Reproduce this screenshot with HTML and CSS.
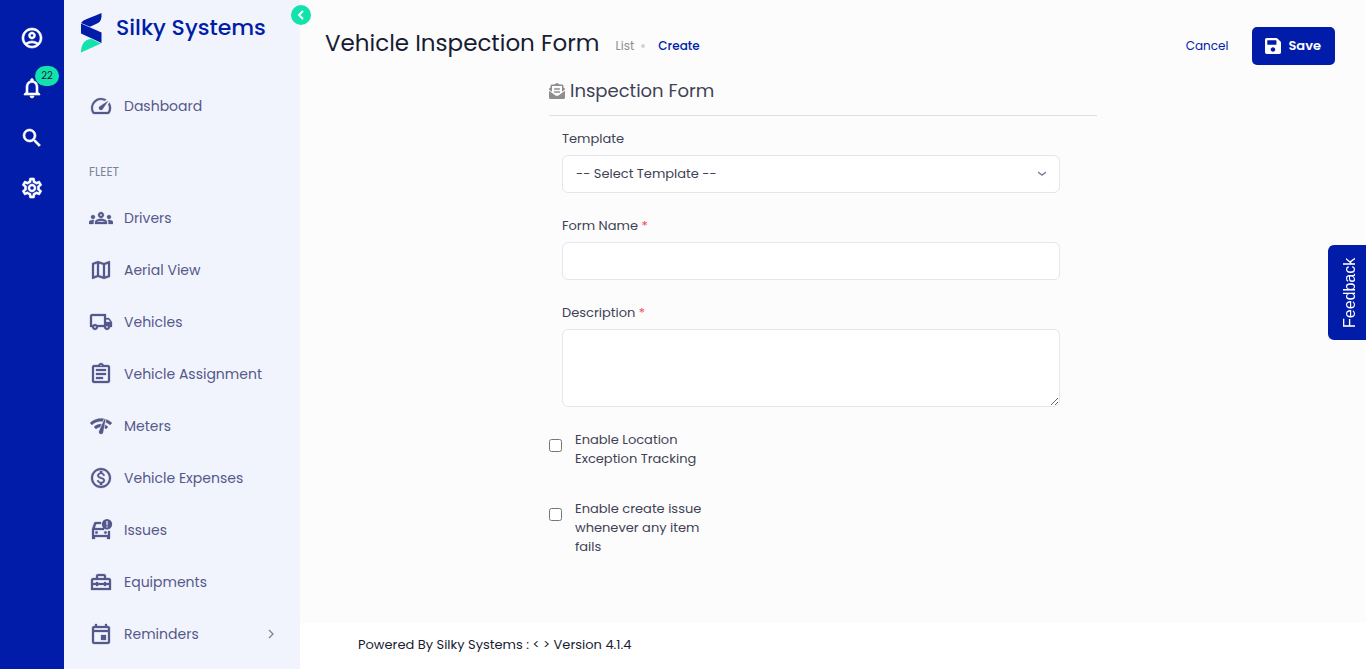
FILE: index.html
```html
<!DOCTYPE html>
<html lang="en">
<head>
    <meta charset="UTF-8">
    <meta name="viewport" content="width=device-width, initial-scale=1.0">
    <title>Vehicle Inspection Form | Silky Systems</title>
    <link rel="stylesheet" href="styles.css">
</head>
<body>
    <div class="page">
        <!-- Icon rail -->
        <nav class="rail">
            <a href="#" class="rail-link" aria-label="Account">
                <svg class="icon" viewBox="0 0 24 24"><path d="M12 2C6.48 2 2 6.48 2 12s4.48 10 10 10 10-4.48 10-10S17.52 2 12 2zM7.35 18.5C8.66 17.56 10.26 17 12 17s3.34.56 4.65 1.5C15.34 19.44 13.74 20 12 20s-3.34-.56-4.65-1.5zm10.79-1.38C16.45 15.8 14.32 15 12 15s-4.45.8-6.14 2.12C4.7 15.73 4 13.95 4 12c0-4.42 3.58-8 8-8s8 3.58 8 8c0 1.95-.7 3.73-1.86 5.12zM12 6c-1.93 0-3.5 1.57-3.5 3.5S10.07 13 12 13s3.5-1.57 3.5-3.5S13.93 6 12 6zm0 5c-.83 0-1.5-.67-1.5-1.5S11.17 8 12 8s1.5.67 1.5 1.5S12.83 11 12 11z"/></svg>
            </a>
            <a href="#" class="rail-link" aria-label="Notifications">
                <svg class="icon" viewBox="0 0 24 24"><path d="M12 22c1.1 0 2-.9 2-2h-4c0 1.1.89 2 2 2zm6-6v-5c0-3.07-1.63-5.64-4.5-6.32V4c0-.83-.67-1.5-1.5-1.5s-1.5.67-1.5 1.5v.68C7.64 5.36 6 7.92 6 11v5l-2 2v1h16v-1l-2-2zm-2 1H8v-6c0-2.48 1.51-4.5 4-4.5s4 2.02 4 4.5v6z"/></svg>
                <span class="badge">22</span>
            </a>
            <a href="#" class="rail-link" aria-label="Search">
                <svg class="icon" viewBox="0 0 24 24"><path d="M15.5 14h-.79l-.28-.27A6.471 6.471 0 0 0 16 9.5 6.5 6.5 0 1 0 9.5 16c1.61 0 3.09-.59 4.23-1.57l.27.28v.79l5 4.99L20.49 19l-4.99-5zm-6 0C7.01 14 5 11.99 5 9.5S7.01 5 9.5 5 14 7.01 14 9.5 11.99 14 9.5 14z"/></svg>
            </a>
            <a href="#" class="rail-link" aria-label="Settings">
                <svg class="icon" viewBox="0 0 24 24"><path d="M19.43 12.98c.04-.32.07-.64.07-.98 0-.34-.03-.66-.07-.98l2.11-1.65c.19-.15.24-.42.12-.64l-2-3.46a.5.5 0 0 0-.61-.22l-2.49 1c-.52-.4-1.08-.73-1.69-.98l-.38-2.65A.488.488 0 0 0 14 2h-4c-.25 0-.46.18-.49.42l-.38 2.65c-.61.25-1.17.59-1.69.98l-2.49-1a.566.566 0 0 0-.18-.03c-.17 0-.34.09-.43.25l-2 3.46c-.13.22-.07.49.12.64l2.11 1.65c-.04.32-.07.65-.07.98 0 .33.03.66.07.98l-2.11 1.65c-.19.15-.24.42-.12.64l2 3.46a.5.5 0 0 0 .61.22l2.49-1c.52.4 1.08.73 1.69.98l.38 2.65c.03.24.24.42.49.42h4c.25 0 .46-.18.49-.42l.38-2.65c.61-.25 1.17-.59 1.69-.98l2.49 1c.06.02.12.03.18.03.17 0 .34-.09.43-.25l2-3.46c.12-.22.07-.49-.12-.64l-2.11-1.65zm-1.98-1.71c.04.31.05.52.05.73 0 .21-.02.43-.05.73l-.14 1.13.89.7 1.08.84-.7 1.21-1.27-.51-1.04-.42-.9.68c-.43.32-.84.56-1.25.73l-1.06.43-.16 1.13-.2 1.35h-1.4l-.19-1.35-.16-1.13-1.06-.43c-.43-.18-.83-.41-1.23-.71l-.91-.7-1.06.43-1.27.51-.7-1.21 1.08-.84.89-.7-.14-1.13c-.03-.31-.05-.54-.05-.74s.02-.43.05-.73l.14-1.13-.89-.7-1.08-.84.7-1.21 1.27.51 1.04.42.9-.68c.43-.32.84-.56 1.25-.73l1.06-.43.16-1.13.2-1.35h1.39l.19 1.35.16 1.13 1.06.43c.43.18.83.41 1.23.71l.91.7 1.06-.43 1.27-.51.7 1.21-1.07.85-.89.7.14 1.13zM12 8c-2.21 0-4 1.79-4 4s1.79 4 4 4 4-1.79 4-4-1.79-4-4-4zm0 6c-1.1 0-2-.9-2-2s.9-2 2-2 2 .9 2 2-.9 2-2 2z"/></svg>
            </a>
        </nav>

        <!-- Sidebar -->
        <aside class="sidebar">
            <a href="#" class="brand">
                <svg class="brand-logo" viewBox="0 0 22 40">
                    <path fill="#001ca8" d="M21.500 0v4C21 8 19 10 16 11l-6 2.800L1 10C4 6 8 6 21.500 0z"/>
                    <path fill="#001ca8" d="M1 10.500l20.500 9V30L1 20.500z"/>
                    <path fill="#12e2ac" d="M1 39.500C1 31 5 26 11.500 26l9.500 4.500z"/>
                </svg>
                <span>Silky Systems</span>
            </a>
            <button type="button" class="collapse" aria-label="Collapse menu">
                <svg viewBox="0 0 20 20"><path d="M12 6l-4 4 4 4" fill="none" stroke="#fff" stroke-width="2"/></svg>
            </button>

            <nav class="menu">
                <a href="#" class="menu-link">
                    <svg class="icon" viewBox="0 0 24 24"><path d="m20.380 8.570-1.230 1.850a8 8 0 0 1-.22 7.580H5.070A8 8 0 0 1 15.580 6.850l1.850-1.230A10 10 0 0 0 3.350 19a2 2 0 0 0 1.720 1h13.850a2 2 0 0 0 1.740-1 10 10 0 0 0-.27-10.440zm-9.790 6.840a2 2 0 0 0 2.830 0l5.660-8.490-8.490 5.660a2 2 0 0 0 0 2.830z"/></svg>
                    <span>Dashboard</span>
                </a>
                <h2 class="menu-title">FLEET</h2>
                <a href="#" class="menu-link">
                    <svg class="icon" viewBox="0 0 24 24"><path d="M4 13c1.100 0 2-.9 2-2s-.9-2-2-2-2 .9-2 2 .9 2 2 2zm1.130 1.100C4.760 14.040 4.390 14 4 14c-.99 0-1.930.21-2.780.58A2.010 2.010 0 0 0 0 16.430V18h4.500v-1.610c0-.83.23-1.610.63-2.290zM20 13c1.100 0 2-.9 2-2s-.9-2-2-2-2 .9-2 2 .9 2 2 2zm4 3.430c0-.81-.48-1.530-1.220-1.850A6.950 6.950 0 0 0 20 14c-.39 0-.76.04-1.130.1.4.68.63 1.460.63 2.290V18H24v-1.570zm-7.760-2.780A10.100 10.100 0 0 0 12 12.750c-1.630 0-3.070.39-4.240.9A2.988 2.988 0 0 0 6 16.390V18h12v-1.610c0-1.180-.68-2.260-1.760-2.740zM8.070 16c.09-.23.13-.39.91-.69.97-.38 1.990-.56 3.020-.56s2.050.18 3.020.56c.77.3.81.46.91.69H8.070zM12 8c.55 0 1 .45 1 1s-.45 1-1 1-1-.45-1-1 .45-1 1-1m0-2c-1.660 0-3 1.340-3 3s1.340 3 3 3 3-1.340 3-3-1.340-3-3-3z"/></svg>
                    <span>Drivers</span>
                </a>
                <a href="#" class="menu-link">
                    <svg class="icon" viewBox="0 0 24 24"><path d="m20.500 3-.16.03L15 5.100 9 3 3.360 4.900c-.21.07-.36.25-.36.48V20.500c0 .28.22.5.5.5l.16-.03L9 18.900l6 2.100 5.640-1.900c.21-.07.36-.25.36-.48V3.500c0-.28-.22-.5-.5-.5zM10 5.470l4 1.400v11.660l-4-1.400V5.470zm-5 .99 3-1.010v11.700l-3 1.160V6.460zm14 11.080-3 1.010V6.860l3-1.160v11.840z"/></svg>
                    <span>Aerial View</span>
                </a>
                <a href="#" class="menu-link">
                    <svg class="icon" viewBox="0 0 24 24"><path d="M20 8h-3V4H3c-1.100 0-2 .9-2 2v11h2c0 1.660 1.340 3 3 3s3-1.340 3-3h6c0 1.660 1.340 3 3 3s3-1.340 3-3h2v-5l-3-4zm-.5 1.500 1.960 2.500H17V9.500h2.500zM6 18c-.55 0-1-.45-1-1s.45-1 1-1 1 .45 1 1-.45 1-1 1zm2.220-3c-.55-.61-1.330-1-2.220-1s-1.670.39-2.220 1H3V6h12v9H8.220zM18 18c-.55 0-1-.45-1-1s.45-1 1-1 1 .45 1 1-.45 1-1 1z"/></svg>
                    <span>Vehicles</span>
                </a>
                <a href="#" class="menu-link">
                    <svg class="icon" viewBox="0 0 24 24"><path d="M7 15h7v2H7zm0-4h10v2H7zm0-4h10v2H7zm12-4h-4.180C14.400 1.840 13.300 1 12 1c-1.300 0-2.400.84-2.820 2H5c-.14 0-.27.01-.4.04a2.008 2.008 0 0 0-1.440 1.190c-.1.23-.16.49-.16.77v14c0 .27.06.54.16.78s.25.45.43.64c.27.27.62.47 1.010.55.13.02.26.03.4.03h14c1.100 0 2-.9 2-2V5c0-1.100-.9-2-2-2zm-7-.25c.41 0 .75.34.75.75s-.34.75-.75.75-.75-.34-.75-.75.34-.75.75-.75zM19 19H5V5h14v14z"/></svg>
                    <span>Vehicle Assignment</span>
                </a>
                <a href="#" class="menu-link">
                    <svg class="icon" viewBox="0 0 24 24"><path d="M15.900 5c-.17 0-.32.09-.41.23l-.07.15-5.180 11.650c-.16.29-.26.61-.26.96 0 1.110.9 2.010 2.010 2.010.96 0 1.770-.68 1.960-1.590l.01-.03L16.400 5.500c0-.28-.22-.5-.5-.5zM1 9l2 2c2.880-2.880 6.790-4.080 10.530-3.620l1.190-2.680C9.890 3.840 4.740 5.270 1 9zm20 2 2-2a15.367 15.367 0 0 0-5.590-3.570l-.53 2.820c1.500.62 2.900 1.530 4.120 2.750zm-4 4 2-2c-.8-.8-1.700-1.420-2.660-1.890l-.55 2.920c.42.27.83.59 1.210.97zM5 13l2 2a7.100 7.100 0 0 1 4.030-2l1.280-2.880c-2.630-.08-5.300.87-7.310 2.880z"/></svg>
                    <span>Meters</span>
                </a>
                <a href="#" class="menu-link">
                    <svg class="icon" viewBox="0 0 24 24"><path d="M12 2C6.480 2 2 6.480 2 12s4.480 10 10 10 10-4.480 10-10S17.520 2 12 2zm0 18c-4.410 0-8-3.590-8-8s3.590-8 8-8 8 3.590 8 8-3.590 8-8 8zm.31-8.860c-1.770-.45-2.340-.94-2.340-1.670 0-.84.79-1.430 2.100-1.430 1.380 0 1.900.66 1.940 1.640h1.710c-.05-1.340-.87-2.570-2.490-2.970V5H10.900v1.690c-1.510.32-2.720 1.300-2.720 2.810 0 1.790 1.490 2.690 3.660 3.210 1.950.46 2.340 1.150 2.340 1.870 0 .53-.39 1.390-2.100 1.390-1.600 0-2.230-.72-2.320-1.640H8.040c.1 1.700 1.360 2.660 2.860 2.970V19h2.340v-1.670c1.520-.29 2.720-1.160 2.730-2.770-.01-2.200-1.900-2.960-3.660-3.420z"/></svg>
                    <span>Vehicle Expenses</span>
                </a>
                <a href="#" class="menu-link">
                    <svg class="icon" viewBox="0 0 24 24">
                        <path d="M12 4H6.500c-.7 0-1.200.4-1.400 1L3 11v10h3v-2h12v2h3v-8h-2v4H5v-5h10v-2H5.800l1.400-4H12z"/>
                        <circle cx="7.500" cy="14.500" r="1.300"/><circle cx="16.500" cy="14.500" r="1.300"/>
                        <path stroke="none" fill-rule="evenodd" d="M18 1a5.200 5.200 0 1 1 0 10.400A5.200 5.200 0 0 1 18 1zm-.6 2v4.200h1.200V3zm0 5.200v1.200h1.200V8.200z"/>
                    </svg>
                    <span>Issues</span>
                </a>
                <a href="#" class="menu-link">
                    <svg class="icon" viewBox="0 0 24 24"><path fill-rule="evenodd" d="M9 4h6c1.100 0 2 .9 2 2v2h3c1.100 0 2 .9 2 2v10H2V10c0-1.100.9-2 2-2h3V6c0-1.100.9-2 2-2zm0 2v2h6V6zM4 10v3h3v-1h2v1h6v-1h2v1h3v-3zm0 5v3h16v-3h-3v1h-2v-1H9v1H7v-1z"/></svg>
                    <span>Equipments</span>
                </a>
                <a href="#" class="menu-link">
                    <svg class="icon" viewBox="0 0 24 24"><path d="M19 4h-1V2h-2v2H8V2H6v2H5c-1.110 0-1.990.9-1.990 2L3 20a2 2 0 0 0 2 2h14c1.100 0 2-.9 2-2V6c0-1.100-.9-2-2-2zm0 16H5V10h14v10zm0-12H5V6h14v2zm-7 5h5v5h-5z"/></svg>
                    <span>Reminders</span>
                    <svg class="arrow" viewBox="0 0 10 10"><path d="M3 1l4 4-4 4" fill="none" stroke="#7e8299" stroke-width="1.300"/></svg>
                </a>
            </nav>
        </aside>

        <!-- Content -->
        <div class="content">
            <header class="header">
                <h1>Vehicle Inspection Form</h1>
                <nav class="breadcrumb">
                    <a href="#" class="crumb">List</a>
                    <span class="dot"></span>
                    <a href="#" class="crumb-active">Create</a>
                </nav>
                <a href="#" class="cancel">Cancel</a>
                <button type="submit" form="inspection-form" class="save">
                    <svg viewBox="0 32 448 448"><path d="M433.941 129.941l-83.882-83.882A48 48 0 0 0 316.118 32H48C21.490 32 0 53.490 0 80v352c0 26.510 21.490 48 48 48h352c26.510 0 48-21.490 48-48V163.882a48 48 0 0 0-14.059-33.941zM224 416c-35.346 0-64-28.654-64-64 0-35.346 28.654-64 64-64s64 28.654 64 64c0 35.346-28.654 64-64 64zm96-304.520V212c0 6.627-5.373 12-12 12H76c-6.627 0-12-5.373-12-12V108c0-6.627 5.373-12 12-12h228.520c3.183 0 6.235 1.264 8.485 3.515l3.480 3.480A11.996 11.996 0 0 1 320 111.480z"/></svg>
                    <span>Save</span>
                </button>
            </header>

            <main class="main">
                <form class="form" id="inspection-form">
                    <h2 class="form-title">
                        <svg viewBox="0 0 512 512"><path d="M176 216h160c8.840 0 16-7.160 16-16v-16c0-8.840-7.160-16-16-16H176c-8.840 0-16 7.160-16 16v16c0 8.840 7.160 16 16 16zm-16 80c0 8.840 7.160 16 16 16h160c8.840 0 16-7.160 16-16v-16c0-8.840-7.160-16-16-16H176c-8.840 0-16 7.160-16 16v16zm96 121.130c-16.420 0-32.840-5.060-46.860-15.190L0 250.860V464c0 26.510 21.490 48 48 48h416c26.510 0 48-21.490 48-48V250.860L302.860 401.940c-14.020 10.120-30.440 15.190-46.860 15.190zm237.610-254.180c-8.850-6.940-17.240-13.470-29.610-22.810V96c0-26.510-21.490-48-48-48h-77.550c-3.040-2.200-5.870-4.260-9.040-6.560C312.600 29.170 279.200-.35 256 0c-23.200-.35-56.590 29.170-73.410 41.440-3.170 2.300-6 4.360-9.040 6.560H96c-26.510 0-48 21.490-48 48v44.140c-12.370 9.330-20.760 15.870-29.610 22.810A47.995 47.995 0 0 0 0 200.720v10.650l96 69.350V96h320v184.720l96-69.350v-10.650c0-14.740-6.780-28.670-18.390-37.770z"/></svg>
                        <span>Inspection Form</span>
                    </h2>
                    <div class="field">
                        <label for="template">Template</label>
                        <select id="template" class="control">
                            <option>-- Select Template --</option>
                        </select>
                    </div>
                    <div class="field">
                        <label for="form-name">Form Name <span class="required">*</span></label>
                        <input type="text" id="form-name" class="control">
                    </div>
                    <div class="field">
                        <label for="description">Description <span class="required">*</span></label>
                        <textarea id="description" class="control"></textarea>
                    </div>
                    <div class="check">
                        <input type="checkbox" id="location">
                        <label for="location">Enable Location Exception Tracking</label>
                    </div>
                    <div class="check">
                        <input type="checkbox" id="issue">
                        <label for="issue">Enable create issue whenever any item fails</label>
                    </div>
                </form>
            </main>

            <footer class="footer">Powered By Silky Systems : &lt; &gt; Version 4.1.4</footer>
        </div>
    </div>

    <button type="button" class="feedback">Feedback</button>
</body>
</html>
```
FILE: styles.css
```css
/* General Styles */
* {
    box-sizing: border-box;
}

body {
    margin: 0;
    font-family: 'Poppins', 'Inter', sans-serif;
    font-size: 13px;
    line-height: 20px;
    color: #3f4254;
    background-color: #fcfcfc;
}

a {
    text-decoration: none;
}

h1, h2 {
    margin: 0;
    font-weight: 400;
}

button, input, select, textarea {
    font: inherit;
    color: inherit;
}

.page {
    display: flex;
    height: 100vh;
    overflow: hidden;
}

.icon {
    width: 24px;
    height: 24px;
    flex: none;
    fill: currentColor;
    stroke: currentColor;
    stroke-width: 0.3;
}

/* Icon Rail */
.rail {
    flex: none;
    width: 64px;
    padding-top: 26px;
    display: flex;
    flex-direction: column;
    align-items: center;
    gap: 26px;
    background-color: #001ca8;
}

.rail-link {
    position: relative;
    height: 24px;
    color: #fff;
}

.rail .icon {
    stroke-width: 0.6;
}

.badge {
    position: absolute;
    top: -10px;
    left: 15px;
    width: 24px;
    border-radius: 10px;
    font-size: 10px;
    text-align: center;
    color: #181c32;
    background-color: #12e2ac;
}

/* Sidebar */
.sidebar {
    position: relative;
    flex: none;
    width: 236px;
    background-color: #f1f4fc;
}

.brand {
    display: flex;
    gap: 14px;
    padding: 13px 0 0 16px;
    font-size: 22px;
    font-weight: 500;
    line-height: 30px;
    color: #001ca8;
}

.brand-logo {
    width: 22px;
    height: 40px;
}

.collapse {
    position: absolute;
    top: 5px;
    right: -11px;
    width: 20px;
    height: 20px;
    padding: 0;
    border: none;
    border-radius: 50%;
    background-color: #12e2ac;
}

.collapse svg {
    display: block;
}

.menu {
    padding: 27px 24px 0 25px;
}

.menu-link {
    display: flex;
    align-items: center;
    gap: 11px;
    height: 52px;
    font-size: 14px;
    color: #55588b;
}

.menu-title {
    padding: 30px 0 10px;
    font-size: 12px;
    color: #7e8299;
}

.arrow {
    width: 10px;
    height: 10px;
    margin-left: auto;
}

/* Content */
.content {
    flex: 1;
    min-width: 0;
    display: flex;
    flex-direction: column;
}

.header {
    display: flex;
    align-items: center;
    padding: 27px 31px 0 25px;
}

.header h1 {
    padding-bottom: 6px;
    font-size: 23px;
    line-height: 30px;
    color: #181c32;
}

.breadcrumb {
    display: flex;
    align-items: center;
    margin: 0 auto 0 16px;
    font-size: 12px;
}

.crumb {
    color: #8e8e96;
}

.dot {
    width: 4px;
    height: 4px;
    margin: 0 13px 0 7px;
    border-radius: 50%;
    background-color: #d1d3e0;
}

.crumb-active {
    font-weight: 500;
    color: #001ca8;
}

.cancel {
    margin-right: 24px;
    font-size: 12px;
    color: #001ca8;
}

.save {
    display: flex;
    align-items: center;
    gap: 7px;
    height: 38px;
    padding: 0 14px 0 13px;
    border: none;
    border-radius: 5px;
    font-weight: 600;
    color: #fff;
    background-color: #001ca8;
}

.save svg {
    width: 16px;
    height: 16px;
    fill: #fff;
}

/* Form */
.main {
    flex: 1;
    padding: 16px 20px 0 0;
}

.form {
    max-width: 548px;
    margin: 0 auto;
}

.form-title {
    display: flex;
    align-items: center;
    gap: 5px;
    margin-bottom: 13px;
    padding-bottom: 14px;
    border-bottom: 1px solid #dedee4;
    font-size: 18px;
}

.form-title svg {
    width: 16px;
    height: 16px;
    fill: #8e8e8e;
}

.field {
    display: flex;
    flex-direction: column;
    gap: 6px;
    margin-bottom: 23px;
    padding: 0 37px 0 13px;
}

.required {
    color: #f64e60;
}

.control {
    width: 100%;
    height: 38px;
    padding: 0 13px;
    border: 1px solid #e4e6ef;
    border-radius: 6px;
    background-color: #fff;
}

select.control {
    appearance: none;
    background: #fff url("data:image/svg+xml,%3Csvg xmlns='http://www.w3.org/2000/svg' viewBox='0 0 8 8'%3E%3Cpath d='M0 2l4 3 4-3' fill='none' stroke='%237e8299' stroke-width='1.4'/%3E%3C/svg%3E") no-repeat right 13px center / 8px 8px;
}

textarea.control {
    height: 78px;
    resize: vertical;
}

.check {
    display: flex;
    align-items: flex-start;
    gap: 13px;
    margin-bottom: 31px;
    line-height: 19px;
}

.check input {
    flex: none;
    width: 13px;
    height: 13px;
    margin: 9px 0 0;
}

.check label {
    width: 25%;
}

/* Footer */
.footer {
    padding: 12px 58px 14px;
    color: #181c32;
    background-color: #fff;
}

/* Feedback Tab */
.feedback {
    position: fixed;
    top: 245px;
    right: 0;
    width: 38px;
    height: 95px;
    padding: 0 6px 0 0;
    border: none;
    border-radius: 0 6px 6px 0;
    font-family: 'Liberation Sans', Arial, sans-serif;
    font-size: 16px;
    color: #fff;
    background-color: #001ca8;
    writing-mode: vertical-rl;
    transform: rotate(180deg);
}
```
